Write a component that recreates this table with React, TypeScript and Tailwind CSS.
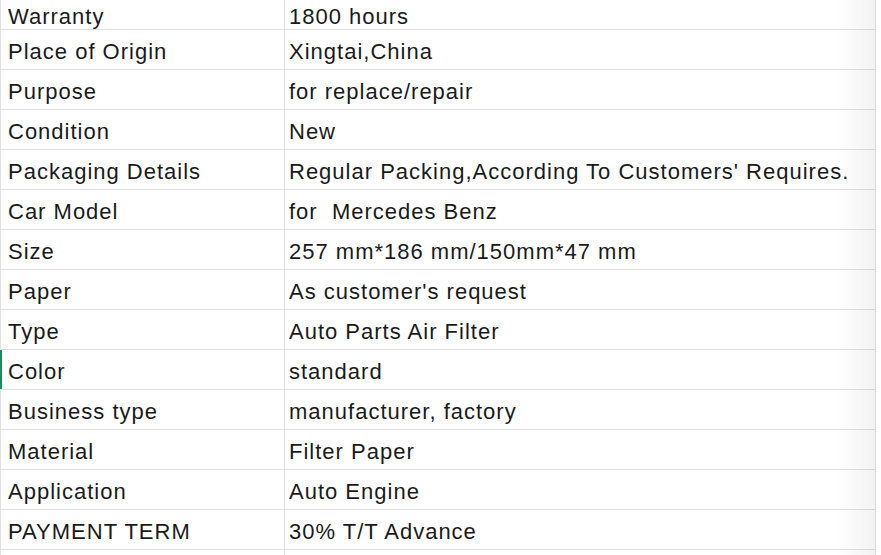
const rows: [string, string][] = [
  ['Warranty', '1800 hours'],
  ['Place of Origin', 'Xingtai,China'],
  ['Purpose', 'for replace/repair'],
  ['Condition', 'New'],
  ['Packaging Details', "Regular Packing,According To Customers' Requires."],
  ['Car Model', 'for  Mercedes Benz'],
  ['Size', '257 mm*186 mm/150mm*47 mm'],
  ['Paper', "As customer's request"],
  ['Type', 'Auto Parts Air Filter'],
  ['Color', 'standard'],
  ['Business type', 'manufacturer, factory'],
  ['Material', 'Filter Paper'],
  ['Application', 'Auto Engine'],
  ['PAYMENT TERM', '30% T/T Advance'],
  ['', ''],
];

export default function App() {
  return (
    <div className="w-[881px] h-[555px] overflow-hidden bg-white font-['Liberation_Sans',Arial,sans-serif] text-[22px] tracking-[1px] text-[#1a1a1a]">
      <div className="relative w-[876px]">
        {rows.map(([label, value], i) => (
          <div key={i} className={`flex border-b border-[#e1e1e1] ${i === 0 ? 'h-[30px]' : 'h-[40px]'}`}>
            <div
              className={`w-[285px] shrink-0 border-r border-[#e1e1e1] flex items-center pt-[3px] leading-[25px] ${
                label === 'Color' ? 'border-l-2 border-l-[#1f8a5b] pl-[6px]' : 'border-l pl-[7px]'
              }`}
            >
              <span className="whitespace-pre">{label}</span>
            </div>
            <div className="flex-1 border-r border-[#dcdcdc] flex items-center pt-[3px] pl-[4px] leading-[25px]">
              <span className="whitespace-pre">{value}</span>
            </div>
          </div>
        ))}
        {/* scroll edge shade */}
        <div className="pointer-events-none absolute top-0 bottom-0 right-px w-[38px] bg-gradient-to-r from-transparent to-black/[0.05]" />
      </div>
    </div>
  );
}
